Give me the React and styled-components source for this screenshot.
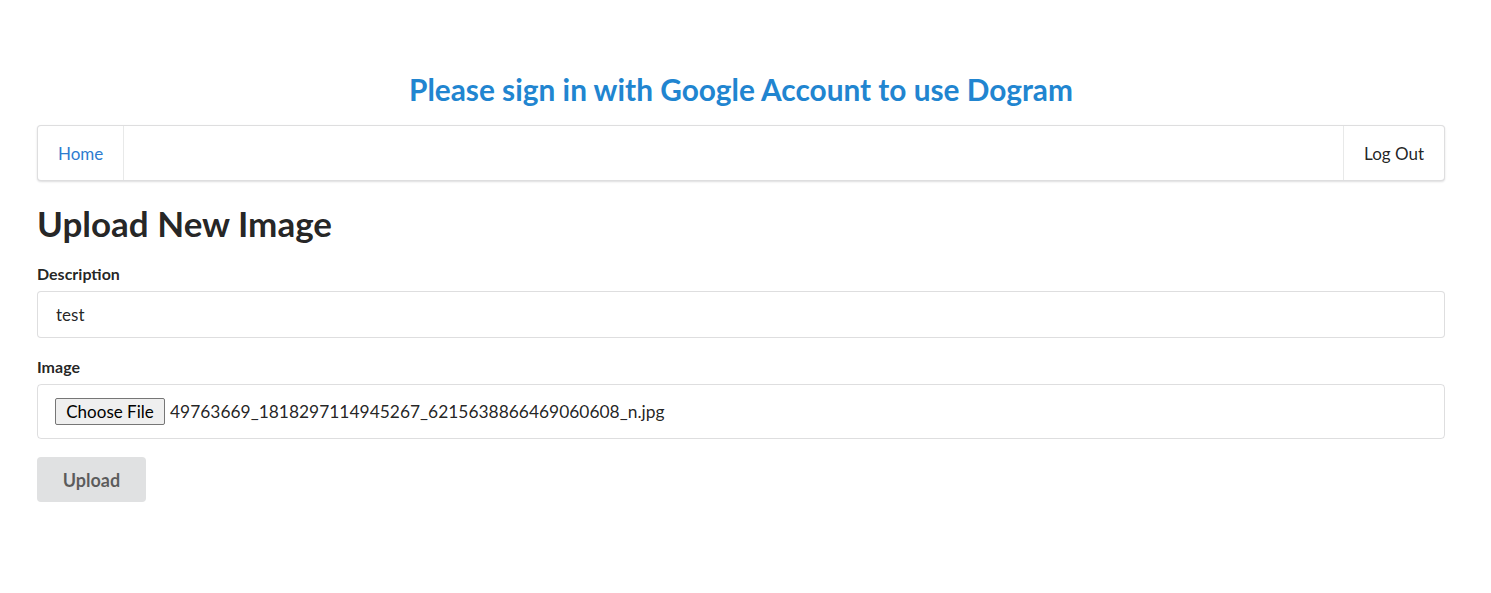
import * as React from "react";
import styled, { createGlobalStyle } from "styled-components";

const GlobalStyle = createGlobalStyle`
    html, body {
        margin: 0;
        padding: 0;
        background: #ffffff;
        font-family: Lato, "Helvetica Neue", Arial, sans-serif;
        font-size: 16px;
        color: rgba(0, 0, 0, 0.87);
    }
`;

const App = () => {
    return (
        <>
            <GlobalStyle />
            <Page>
                <Title>Please sign in with Google Account to use Dogram</Title>
                <Menu>
                    <MenuItem $active>Home</MenuItem>
                    <MenuSpacer />
                    <MenuItem $right>Log Out</MenuItem>
                </Menu>
                <Heading>Upload New Image</Heading>
                <Form>
                    <Field>
                        <Label>Description</Label>
                        <Input defaultValue="test" />
                    </Field>
                    <Field>
                        <Label>Image</Label>
                        <FileBox>
                            <ChooseButton type="button">Choose File</ChooseButton>
                            <FileName>49763669_1818297114945267_6215638866469060608_n.jpg</FileName>
                        </FileBox>
                    </Field>
                    <SubmitButton type="button">Upload</SubmitButton>
                </Form>
            </Page>
        </>
    );
};

const Page = styled.div`
    padding: 72px 46px 0 37px;
    display: flex;
    flex-direction: column;
`;

const Title = styled.h2`
    margin: 0;
    text-align: center;
    color: #2185d0;
    font-size: 29.8px;
    font-weight: 700;
    line-height: 36px;
`;

const Menu = styled.div`
    margin-top: 17px;
    display: flex;
    height: 54px;
    border: 1px solid rgba(34, 36, 38, 0.15);
    border-radius: 4px;
    box-shadow: 0 1px 2px 0 rgba(34, 36, 38, 0.15);
    background: #fff;
`;

const MenuItem = styled.div`
    display: flex;
    align-items: center;
    padding: 0 20px;
    font-size: 17px;
    color: ${(p) => (p.$active ? "#2e7ccf" : "rgba(0, 0, 0, 0.87)")};
    border-left: ${(p) => (p.$right ? "1px solid rgba(34, 36, 38, 0.1)" : "none")};
    border-right: ${(p) => (p.$right ? "none" : "1px solid rgba(34, 36, 38, 0.1)")};
`;

const MenuSpacer = styled.div`
    flex: 1;
`;

const Heading = styled.h1`
    margin: 20px 0 0;
    font-size: 35px;
    font-weight: 700;
    line-height: 44px;
    color: rgba(0, 0, 0, 0.87);
`;

const Form = styled.form`
    margin-top: 20px;
    display: flex;
    flex-direction: column;
    gap: 20px;
`;

const Field = styled.div`
    display: flex;
    flex-direction: column;
    gap: 8px;
`;

const Label = styled.label`
    font-size: 16px;
    font-weight: 700;
    line-height: 18px;
    color: rgba(0, 0, 0, 0.87);
`;

const Input = styled.input`
    box-sizing: border-box;
    height: 47px;
    padding: 0 18px;
    border: 1px solid rgba(34, 36, 38, 0.15);
    border-radius: 4px;
    font-family: Lato, "Helvetica Neue", Arial, sans-serif;
    font-size: 17px;
    color: rgba(0, 0, 0, 0.87);
    outline: none;
`;

const FileBox = styled.div`
    box-sizing: border-box;
    height: 55px;
    padding: 0 17px;
    display: flex;
    align-items: center;
    gap: 5px;
    border: 1px solid rgba(34, 36, 38, 0.15);
    border-radius: 4px;
`;

const ChooseButton = styled.button`
    box-sizing: border-box;
    width: 110px;
    height: 27px;
    padding: 0;
    background: #efefef;
    border: 1px solid #767676;
    border-radius: 2px;
    font-family: Lato, "Helvetica Neue", Arial, sans-serif;
    font-size: 17px;
    color: #000;
`;

const FileName = styled.span`
    font-size: 17.4px;
    color: rgba(0, 0, 0, 0.87);
`;

const SubmitButton = styled.button`
    align-self: flex-start;
    margin-top: -2px;
    width: 109px;
    height: 45px;
    border: none;
    border-radius: 4px;
    background: #e0e1e2;
    color: rgba(0, 0, 0, 0.6);
    font-family: Lato, "Helvetica Neue", Arial, sans-serif;
    font-size: 18px;
    font-weight: 700;
`;

export default App;
